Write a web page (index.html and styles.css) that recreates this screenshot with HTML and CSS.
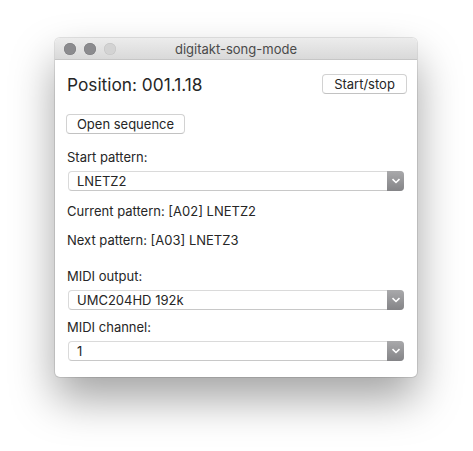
FILE: index.html
```html
<!DOCTYPE html>
<html>
<head>
<meta charset="utf-8">
<link rel="stylesheet" href="styles.css">
</head>
<body>
<div class="window">
  <div class="titlebar">
    <div class="lights">
      <span class="light"></span>
      <span class="light"></span>
      <span class="light off"></span>
    </div>
    <div class="title">digitakt-song-mode</div>
  </div>
  <div class="content">
    <div class="toprow">
      <div class="position">Position: 001.1.18</div>
      <div class="btn">Start/stop</div>
    </div>
    <div class="btn open">Open sequence</div>
    <div class="label first">Start pattern:</div>
    <div class="select"><span class="val">LNETZ2</span><span class="chev"><svg width="10" height="6" viewBox="0 0 10 6"><path d="M1.5 1.2 L5 4.5 L8.5 1.2" fill="none" stroke="#fff" stroke-width="1.6"/></svg></span></div>
    <div class="info cur">Current pattern: [A02] LNETZ2</div>
    <div class="info next">Next pattern: [A03] LNETZ3</div>
    <div class="label midi">MIDI output:</div>
    <div class="select"><span class="val">UMC204HD 192k</span><span class="chev"><svg width="10" height="6" viewBox="0 0 10 6"><path d="M1.5 1.2 L5 4.5 L8.5 1.2" fill="none" stroke="#fff" stroke-width="1.6"/></svg></span></div>
    <div class="label chan">MIDI channel:</div>
    <div class="select"><span class="val">1</span><span class="chev"><svg width="10" height="6" viewBox="0 0 10 6"><path d="M1.5 1.2 L5 4.5 L8.5 1.2" fill="none" stroke="#fff" stroke-width="1.6"/></svg></span></div>
  </div>
</div>
</body>
</html>
```
FILE: styles.css
```css
html, body {
  margin: 0;
  padding: 0;
  background: #ffffff;
}
body {
  width: 473px;
  height: 451px;
  padding: 38px 0 0 55px;
  box-sizing: border-box;
  font-family: "Inter", "Liberation Sans", sans-serif;
  color: #262626;
}
.window {
  width: 362px;
  height: 339px;
  border-radius: 5px;
  background: #ffffff;
  box-shadow: 0 0 0 1px rgba(0,0,0,0.10), 0 22px 44px rgba(0,0,0,0.36);
  overflow: hidden;
  display: flex;
  flex-direction: column;
}
.titlebar {
  height: 22px;
  background: linear-gradient(#ececec, #d9d9d9);
  border-bottom: 1px solid #c6c6c6;
  box-sizing: border-box;
  display: flex;
  align-items: center;
  position: relative;
}
.lights {
  display: flex;
  gap: 8px;
  padding-left: 9px;
}
.light {
  width: 12px;
  height: 12px;
  border-radius: 50%;
  background: #8b8b8e;
  box-shadow: inset 0 0 0 0.5px #7a7a7c;
}
.light.off {
  background: #d3d3d3;
  box-shadow: inset 0 0 0 0.5px #c2c2c2;
}
.title {
  position: absolute;
  left: 0;
  right: 0;
  text-align: center;
  font-size: 13px;
  color: #4a4a4a;
  line-height: 22px;
}
.content {
  padding: 0 10px 0 11px;
  display: flex;
  flex-direction: column;
}
.toprow {
  margin-top: 14px;
  height: 20px;
  display: flex;
  align-items: center;
  justify-content: space-between;
}
.position {
  font-size: 17.3px;
  padding-left: 1px;
}
.btn {
  height: 20px;
  box-sizing: border-box;
  border: 1px solid #d2d2d2;
  border-bottom-color: #c2c2c2;
  border-radius: 4px;
  background: #ffffff;
  font-size: 13px;
  line-height: 18px;
  padding: 0 11px;
  color: #262626;
}
.toprow .btn {
  width: 85px;
  text-align: center;
  padding: 0;
}
.btn.open {
  margin-top: 20px;
  align-self: flex-start;
  width: 119px;
  text-align: center;
  padding: 0;
}
.label, .info {
  font-size: 13px;
  line-height: 16px;
  padding-left: 1px;
}
.label.first { margin-top: 15px; }
.info.cur { margin-top: 12px; }
.info.next { margin-top: 13px; }
.label.midi { margin-top: 20px; }
.label.chan { margin-top: 9px; }
.select {
  margin-top: 6px;
  margin-left: 2px;
  height: 20px;
  width: 336px;
  box-sizing: border-box;
  border: 1px solid #dadada;
  border-bottom-color: #c8c8c8;
  border-radius: 4px;
  display: flex;
  align-items: center;
  justify-content: space-between;
  background: #fff;
}
.select .val {
  font-size: 13px;
  padding-left: 8px;
  color: #262626;
}
.chev {
  width: 17px;
  height: 20px;
  margin: -1px -1px -1px 0;
  border-radius: 0 4px 4px 0;
  background: linear-gradient(#a9a9ab, #848487);
  display: flex;
  align-items: center;
  justify-content: center;
}
```
